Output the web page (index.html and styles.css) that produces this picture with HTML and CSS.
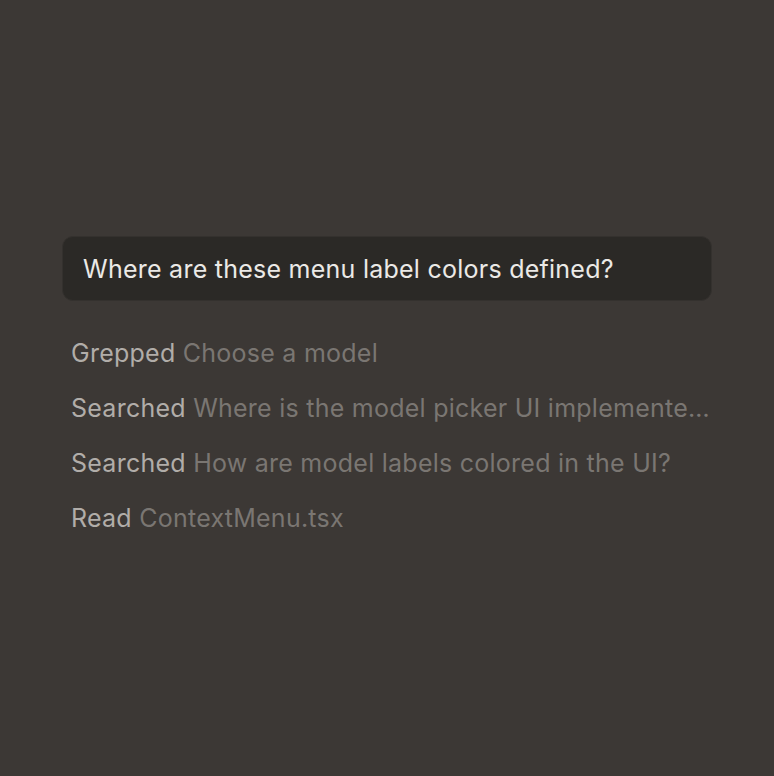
FILE: index.html
```html
<!DOCTYPE html>
<html>
<head>
<meta charset="utf-8">
<link rel="stylesheet" href="styles.css">
</head>
<body>
<main class="thread">
  <div class="query">Where are these menu label colors defined?</div>
  <ul class="steps">
    <li class="step"><span class="verb">Grepped</span> <span class="detail">Choose a model</span></li>
    <li class="step"><span class="verb">Searched</span> <span class="detail">Where is the model picker UI implemente…</span></li>
    <li class="step"><span class="verb">Searched</span> <span class="detail">How are model labels colored in the UI?</span></li>
    <li class="step"><span class="verb">Read</span> <span class="detail">ContextMenu.tsx</span></li>
  </ul>
</main>
</body>
</html>
```
FILE: styles.css
```css
html, body {
  margin: 0;
  height: 100%;
}
body {
  background: #3c3835;
  font-family: Inter, "Noto Sans", sans-serif;
  font-size: 25px;
  letter-spacing: 0.25px;
}
.thread {
  padding: 236px 0 0 62px;
  width: 650px;
}
.query {
  box-sizing: border-box;
  height: 65px;
  display: flex;
  align-items: center;
  padding: 0 20px;
  background: #2b2926;
  border: 1px solid #34312e;
  border-radius: 11px;
  color: #ebe9e6;
}
.steps {
  list-style: none;
  margin: 25px 0 0 9px;
  padding: 0;
  width: 641px;
}
.step {
  height: 55px;
  line-height: 55px;
  white-space: nowrap;
  color: #7a7672;
}
.verb {
  color: #b1ada9;
}
.detail {
  color: #7a7672;
}
```
